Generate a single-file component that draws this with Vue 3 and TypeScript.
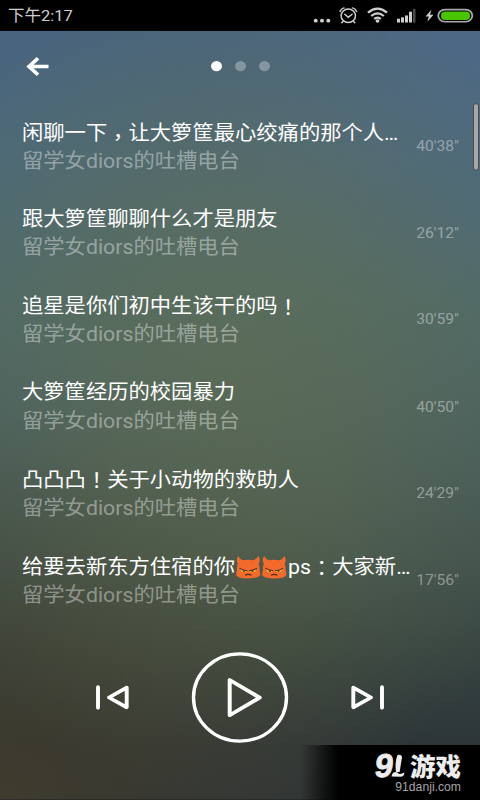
<script setup lang="ts">
interface Track {
  title: string
  duration: string
}

interface Segment {
  kind: 'text' | 'comma' | 'mark' | 'imp'
  text: string
}

const author = '留学女diors的吐槽电台'

const tracks: Track[] = [
  { title: '闲聊一下，让大箩筐最心绞痛的那个人…', duration: '40\'38"' },
  { title: '跟大箩筐聊聊什么才是朋友', duration: '26\'12"' },
  { title: '追星是你们初中生该干的吗！', duration: '30\'59"' },
  { title: '大箩筐经历的校园暴力', duration: '40\'50"' },
  { title: '凸凸凸！关于小动物的救助人', duration: '24\'29"' },
  { title: '给要去新东方住宿的你👿👿ps：大家新…', duration: '17\'56"' },
]

// Full-width punctuation is centred in its cell, and imps are drawn as icons.
function segments(title: string): Segment[] {
  return title
    .split(/(，|！|：|👿)/u)
    .filter((part) => part !== '')
    .map((text) => ({
      text,
      kind: text === '，' ? 'comma' : text === '！' || text === '：' ? 'mark' : text === '👿' ? 'imp' : 'text',
    }))
}
</script>

<template>
  <div class="viewport">
    <div class="screen">
      <div class="status">
        <span class="clock">下午2:17</span>
        <svg class="status-icons" viewBox="0 0 170 33" width="170" height="33">
          <g fill="#cfcfcf">
            <circle cx="5.700" cy="22" r="2" />
            <circle cx="12" cy="22" r="2" />
            <circle cx="18.300" cy="22" r="2" />
          </g>
          <g fill="none" stroke="#cfcfcf" stroke-width="1.500" stroke-linecap="round">
            <circle cx="38.300" cy="16.800" r="7.200" />
            <path d="M34.800 15.200l3.500 3.200 3.800-3.200M30 12.200q1-3 4-3.800M46.600 12.200q-1-3-4-3.800M33 23l-1.200 1.300M43.600 23l1.200 1.300" />
          </g>
          <g fill="none" stroke="#cfcfcf" stroke-width="2.300">
            <path d="M58 13.500q9.500-8.600 19 0M61.200 17q6.300-5.500 12.600 0M64.200 20.200q3.300-2.800 6.600 0" />
          </g>
          <circle cx="67.500" cy="22.300" r="1.900" fill="#cfcfcf" />
          <g fill="#cfcfcf">
            <rect x="87" y="20" width="3" height="4" />
            <rect x="91" y="18.500" width="3" height="5.500" />
            <rect x="95" y="16.500" width="3" height="7.500" />
            <rect x="99" y="12.500" width="3" height="11.500" />
            <rect x="103" y="9.500" width="2.500" height="14.500" fill="#4b4b4b" />
          </g>
          <path d="M121.500 10.500l-6 7h3.300l-1.500 5.700 6.200-7.400h-3.500z" fill="#cfcfcf" />
          <rect x="128.300" y="10.200" width="34" height="13" rx="6.500" fill="#000" stroke="#aaa" stroke-width="1.800" />
          <rect x="131" y="12.200" width="29" height="9" rx="4" fill="#48c400" />
        </svg>
      </div>

      <div class="player">
        <header class="topbar">
          <svg class="back" viewBox="0 0 24 24" width="24" height="24">
            <path d="M13 3.200L4 12l9 8.800M4.500 12h19" fill="none" stroke="#fff" stroke-width="3.700" />
          </svg>
          <div class="dots">
            <i class="dot active"></i>
            <i class="dot"></i>
            <i class="dot"></i>
          </div>
        </header>

        <ul class="tracks">
          <li v-for="track in tracks" :key="track.title" class="track">
            <div class="info">
              <div class="title">
                <template v-for="(part, i) in segments(track.title)" :key="i">
                  <svg v-if="part.kind === 'imp'" class="imp" viewBox="0 0 26 26" width="26.500" height="26">
                    <path d="M3 .8Q.300 5.500 2.600 9.500Q1.400 12 1.700 16Q.800 19 1 21.500Q3.500 25 13 25T25 21.500Q25.200 19 24.300 16Q24.600 12 23.400 9.500Q25.700 5.500 23 .8Q22 4.500 18 5.500Q13 4.800 8 5.500Q4 4.500 3 .8Z" fill="#f26a2c" />
                    <path d="M4.800 14.200Q8 17 12 16.600Q10.500 19 7.800 18.300Q5.300 17.600 4.800 14.200ZM21.200 14.200Q18 17 14 16.600Q15.500 19 18.200 18.300Q20.700 17.600 21.200 14.200Z" fill="#fccb25" />
                    <path d="M4.300 14Q8 16.900 12 16.500M21.700 14Q18 16.900 14 16.500M9.800 21.700Q13 19.600 16.200 21.700" fill="none" stroke="#4e2d22" stroke-width="1.200" />
                    <circle cx="8.700" cy="17.200" r=".9" fill="#4e2d22" />
                    <circle cx="17.300" cy="17.200" r=".9" fill="#4e2d22" />
                  </svg>
                  <span v-else :class="part.kind">{{ part.text }}</span>
                </template>
              </div>
              <div class="author">{{ author }}</div>
            </div>
            <time class="duration">{{ track.duration }}</time>
          </li>
        </ul>

        <div class="controls">
          <svg class="skip" viewBox="0 0 36 30" width="36" height="30">
            <path d="M4 4V26M32.700 4.500V25.500L15 15Z" fill="none" stroke="#fff" stroke-width="3.900" stroke-linecap="round" stroke-linejoin="round" />
          </svg>
          <svg class="play" viewBox="0 0 98 98" width="98" height="98">
            <circle cx="49" cy="49" r="46.500" fill="none" stroke="#fff" stroke-width="3.400" />
            <path d="M38.700 30.300V67.900L68.700 49.100Z" fill="none" stroke="#fff" stroke-width="4" stroke-linejoin="round" />
          </svg>
          <svg class="skip" viewBox="0 0 36 30" width="36" height="30">
            <path d="M32 4V26M3.300 4.500V25.500L21 15Z" fill="none" stroke="#fff" stroke-width="3.900" stroke-linecap="round" stroke-linejoin="round" />
          </svg>
        </div>
        <div class="scrollbar"></div>
      </div>
    </div>

    <div class="watermark">
      <div class="brand">
        <span class="nine">9</span>
        <svg class="stroke-one" viewBox="0 0 14 24" width="14" height="24">
          <path d="M6.500 1Q10.800 .2 11 3.500L8.600 18H5Q3.600 8 6.500 1Z" fill="#ececec" />
          <path d="M.5 22.500Q1 18.500 4 18Q7 18 8 20Q10 20 13.500 18.500Q13 22.800 9.500 22.800Z" fill="#ececec" />
        </svg>
        <span class="game">游戏</span>
      </div>
      <div class="site">91danji.com</div>
    </div>
  </div>
</template>

<style>
body {
  margin: 0;
  overflow: hidden;
  background: #000;
}
</style>

<style scoped>
.viewport {
  position: relative;
  width: 480px;
  height: 800px;
  overflow: hidden;
  font-family: Roboto, "Noto Sans CJK SC", sans-serif;
}
/* The 480x853 layout is squeezed vertically into 800px. */
.screen {
  display: flex;
  flex-direction: column;
  width: 480px;
  height: 853.33px;
  transform: scaleY(0.9375);
  transform-origin: 0 0;
}
.status {
  display: flex;
  justify-content: space-between;
  box-sizing: border-box;
  flex: 0 0 33.07px;
  height: 33.07px;
  padding: 0 0 0 8px;
  background: #000;
}
.clock {
  font-size: 16.5px;
  line-height: 33px;
  color: #cfcfcf;
}
.status-icons {
  width: 170px;
}
.player {
  position: relative;
  display: flex;
  flex-direction: column;
  flex: 1;
  background:
    radial-gradient(ellipse 340px 460px at 235px 370px, rgba(104, 112, 74, 0.5), rgba(104, 112, 74, 0.36) 40%, rgba(104, 112, 74, 0.12) 78%, rgba(104, 112, 74, 0) 100%),
    radial-gradient(ellipse 440px 420px at 0 100%, rgba(70, 62, 42, 0.75), rgba(70, 62, 42, 0.35) 50%, rgba(70, 62, 42, 0) 100%),
    radial-gradient(ellipse 300px 300px at 100% 0, rgba(82, 108, 138, 0.5), rgba(82, 108, 138, 0) 100%),
    linear-gradient(to bottom, #48647f 0%, #4c6979 16%, #4e6a6b 35%, #4a6161 52%, #425450 68%, #384642 80%, #2c3438 93%, #2c3438 100%);
}
.topbar {
  display: flex;
  align-items: center;
  height: 75px;
  padding-left: 24.5px;
}
.dots {
  display: flex;
  gap: 13px;
  margin-left: 162px;
}
.dot {
  width: 11px;
  height: 11px;
  border-radius: 50%;
  background: rgba(255, 255, 255, 0.3);
}
.dot.active {
  background: #fff;
}
.tracks {
  margin: 0;
  padding: 2.7px 21px 0 22px;
  list-style: none;
}
.track {
  display: flex;
  justify-content: space-between;
  align-items: center;
  height: 92.6px;
  white-space: nowrap;
}
.info {
  width: 389px;
  height: 61px;
}
.title,
.author {
  display: flex;
  align-items: center;
  height: 30px;
  font-size: 21.3px;
  line-height: 30px;
}
.title {
  color: #fff;
}
.author {
  height: 29px;
  line-height: 29px;
  color: rgba(255, 255, 255, 0.4);
}
.comma,
.mark {
  width: 1em;
  font-family: "Noto Sans CJK TC", sans-serif;
}
.comma {
  transform: translateY(4px);
}
.imp {
  flex: none;
}
.duration {
  padding-bottom: 2px;
  font-size: 15.6px;
  line-height: 20px;
  color: rgba(255, 255, 255, 0.4);
}
.controls {
  display: flex;
  justify-content: space-between;
  align-items: center;
  height: 98px;
  margin-top: 28.8px;
  padding: 0 94px;
}
.scrollbar {
  position: absolute;
  top: 77px;
  right: 1px;
  width: 4px;
  height: 70px;
  border: 1px solid #454b50;
  border-radius: 3px;
  background: #a7a7a7;
}
.watermark {
  position: absolute;
  right: 0;
  bottom: 0;
  box-sizing: border-box;
  width: 180px;
  height: 55px;
  padding: 8px 19px 0 0;
  background: linear-gradient(to right, rgba(0, 0, 0, 0), #000 38px);
  color: #ececec;
}
.brand {
  display: flex;
  justify-content: flex-end;
  align-items: center;
  height: 26px;
  line-height: 26px;
}
.nine {
  font-family: "Liberation Sans", sans-serif;
  font-size: 33px;
  font-weight: 700;
  -webkit-text-stroke: 0.8px #ececec;
  transform: skewX(-8deg);
}
.stroke-one {
  margin: 0 5px 0 -2px;
}
.game {
  height: 26px;
  font-family: "Noto Sans CJK SC", sans-serif;
  font-size: 25.5px;
  line-height: 23px;
  font-weight: 900;
}
.site {
  font-family: "Liberation Sans", sans-serif;
  font-size: 12.2px;
  line-height: 16px;
  text-align: right;
  color: #a6a6a6;
}
</style>
